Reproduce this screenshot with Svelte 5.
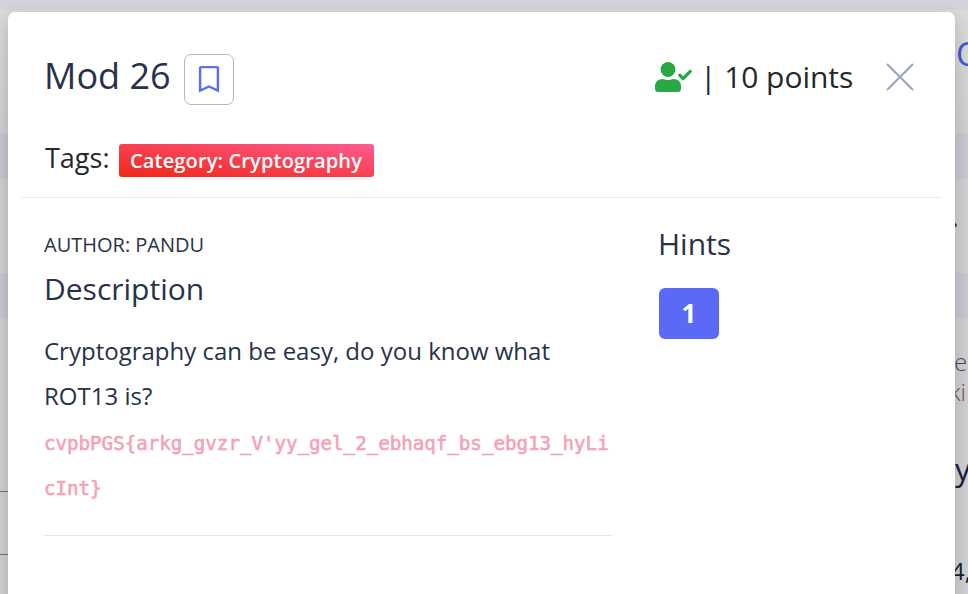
<script>
  const flag = "cvpbPGS{arkg_gvzr_V'yy_gel_2_ebhaqf_bs_ebg13_hyLicInt}";
  const fragments = [
    { text: 'O', x: 956, y: 32, size: 33, color: '#4355d4' },
    { text: '›', x: 952, y: 211, size: 19, color: '#29304b' },
    { text: 'e', x: 954, y: 346, size: 24, color: '#4b4a62', light: true },
    { text: 'ki', x: 949, y: 376, size: 24, color: '#79544f', light: true },
    { text: 'y', x: 955, y: 448, size: 31, color: '#17203a' },
    { text: '4,', x: 951, y: 555, size: 24, color: '#202126' }
  ];
</script>

<div class="page">
  <div class="backdrop" aria-hidden="true">
    <div class="band top"></div>
    <div class="plain first"></div>
    <div class="band second"></div>
    <div class="plain middle"></div>
    <div class="band third"></div>
    {#each fragments as f}
      <span class="fragment" class:light={f.light} style="left:{f.x}px;top:{f.y}px;font-size:{f.size}px;color:{f.color}">{f.text}</span>
    {/each}
    <i class="rule a"></i>
    <i class="rule b"></i>
  </div>

  <section class="modal">
    <header>
      <div class="title-row">
        <h1>Mod 26</h1>
        <button class="bookmark" aria-label="Bookmark">
          <svg width="22" height="29" viewBox="0 0 22 29"><path d="M2.1 25.7V3.1Q2.1 2.1 3.1 2.1H18.9Q19.9 2.1 19.9 3.1V25.7L11 21.5L2.1 25.7Z" fill="none" stroke="#5d6cfb" stroke-width="2.4" /></svg>
        </button>
        <div class="score">
          <svg class="solved" width="38" height="32" viewBox="0 0 38 32"><circle cx="13" cy="8.5" r="7.4" fill="#28a745" /><path d="M0 27.5V26Q0 18 8 18Q13 20 18 18Q26 18 26 26V27.5Q26 31 22.5 31H3.5Q0 31 0 27.5Z" fill="#28a745" /><path d="M24.7 14.2L28 17.7L35.2 10.3" fill="none" stroke="#28a745" stroke-width="3.2" stroke-linecap="round" stroke-linejoin="round" /></svg>
          <span class="points">| 10 points</span>
        </div>
        <button class="close" aria-label="Close">
          <svg width="28" height="28" viewBox="0 0 28 28"><path d="M1 1L27 27M27 1L1 27" fill="none" stroke="#98a3bd" stroke-width="1.9" /></svg>
        </button>
      </div>
      <div class="tags"><span class="label">Tags:</span><span class="tag"><span>Category: Cryptography</span></span></div>
    </header>
    <div class="content">
      <article>
        <div class="author">AUTHOR: PANDU</div>
        <h2>Description</h2>
        <p>Cryptography can be easy, do you know what ROT13 is?</p>
        <code>{flag}</code>
      </article>
      <aside>
        <h2>Hints</h2>
        <button class="hint">1</button>
      </aside>
    </div>
  </section>
</div>

<style>
  :global(body) { margin: 0; overflow: hidden; }
  * { box-sizing: border-box; }
  .page { position: relative; height: 594px; overflow: hidden; font-family: "Open Sans", sans-serif; font-weight: 400; color: #28314a; }
  .backdrop { position: absolute; inset: 0; background: #d0d0d3; }
  .band { background: #c8c8d0; }
  .top { height: 10px; background: #d3d3d9; }
  .first { height: 124px; background: linear-gradient(#dadada, #d0d0d2); }
  .second { height: 45px; }
  .middle { height: 94px; }
  .third { height: 45px; }
  .fragment { position: absolute; line-height: 1.36; white-space: nowrap; }
  .light { font-weight: 300; }
  .rule { position: absolute; left: 0; width: 8px; height: 1px; background: #737382; }
  .a { top: 491px; }
  .b { top: 554px; }
  .modal { position: relative; width: 947px; height: 620px; margin: 12px 0 0 8px; padding: 0 13px; background: #fff; border-radius: 7px; box-shadow: 0 6px 18px rgba(0, 0, 0, .18); }
  header { height: 186px; padding: 42px 28px 0 23px; border-bottom: 1px solid #e9eaec; }
  .title-row { display: flex; height: 51px; }
  h1, h2, p { margin: 0; font-weight: 400; }
  h1 { width: 140px; font-size: 36px; line-height: 43px; white-space: nowrap; }
  button { padding: 0; border: 0; background: none; font-family: inherit; }
  .bookmark { display: flex; width: 50px; height: 51px; border: 1px solid #b0b7c2; border-radius: 7px; padding: 10px 0 0 13px; }
  .score { display: flex; margin-left: auto; color: #25282b; }
  .solved { margin: 7px 10px 0 0; }
  .points { width: 154px; margin-left: -3px; font-size: 30px; line-height: 45px; letter-spacing: -.05px; white-space: nowrap; }
  .close { margin: 9px 0 0 32px; width: 28px; height: 28px; }
  svg { display: block; }
  .tags { display: flex; margin-top: 39px; color: #25282b; }
  .label { width: 75px; padding-left: 1px; font-size: 27px; line-height: 28px; }
  .tag { display: flex; width: 255px; height: 33px; padding-left: 11px; border-radius: 3px; background: linear-gradient(to top right, #ef2817, #f84050 50%, #ff5b93); color: #fff; font-size: 20px; font-weight: 650; line-height: 34px; letter-spacing: .15px; white-space: nowrap; }
  .content { display: flex; justify-content: space-between; padding: 30px 30px 0 23px; }
  article { width: 568px; height: 308px; border-bottom: 1px solid #e5e5e5; }
  .author { height: 34px; font-size: 20px; line-height: 33px; }
  h2 { font-size: 30px; line-height: 38px; white-space: nowrap; }
  article h2 { margin-top: 8px; }
  p { width: 530px; margin-top: 20px; font-size: 24px; line-height: 45px; }
  code { display: block; margin-top: 3px; font-family: "DejaVu Sans Mono", monospace; font-size: 19.15px; font-weight: 400; line-height: 45px; color: #f4a3b5; -webkit-text-stroke: .6px #f4a3b5; word-break: break-all; }
  aside { width: 254px; margin-top: -3px; }
  .hint { display: block; width: 60px; height: 51px; margin-top: 25px; margin-left: 1px; border-radius: 6px; background: #5b6af6; color: #fff; font-size: 26px; font-weight: 700; line-height: 51px; }
</style>
